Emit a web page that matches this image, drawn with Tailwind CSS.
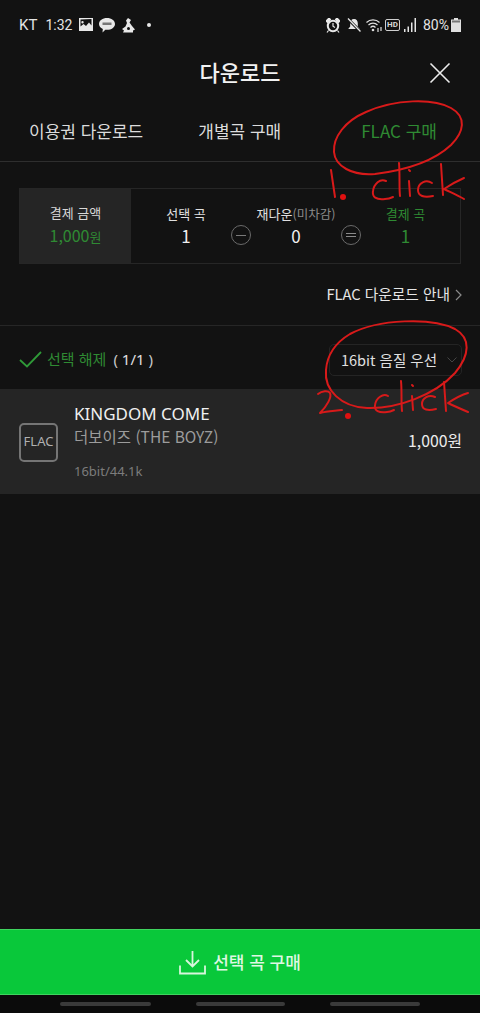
<!DOCTYPE html>
<html lang="ko">
<head>
  <meta charset="UTF-8" />
  <meta name="viewport" content="width=device-width, initial-scale=1" />
  <title>다운로드</title>
  <script src="https://cdn.jsdelivr.net/npm/@tailwindcss/browser@4"></script>
</head>
<body class="bg-[#121212] font-['Noto_Sans_CJK_KR','Noto_Sans',sans-serif]">
  <div class="relative w-[480px] h-[1013px] overflow-hidden flex flex-col bg-[#121212] text-white">

    <!-- status bar -->
    <div class="h-[50px] shrink-0 flex items-center justify-between pl-[19px] pr-[19px] text-[#e4e4e4]">
      <div class="flex items-center">
        <span class="text-[15px] leading-none font-['Roboto']">KT</span>
        <span class="ml-[8px] text-[14px] leading-none font-['Roboto']">1:32</span>
        <svg class="ml-[7px]" width="14" height="14" viewBox="0 0 14 14"><path fill="#e8e8e8" fill-rule="evenodd" d="M0 0h14v13H0zM1.500 1.500v7l3-2.500 2.500 2 3-3.500 2.500 3v-6.500zM3.500 3a1.200 1.200 0 1 1 0 2.400 1.200 1.200 0 0 1 0-2.400z"/></svg>
        <svg class="ml-[6px]" width="16" height="15" viewBox="0 0 16 15"><path fill="#e8e8e8" d="M8 0c4.400 0 8 2.600 8 5.900s-3.600 5.900-8 5.900c-.6 0-1.200 0-1.700-.1L3.500 14.500l.3-3.600C1.500 9.800 0 8 0 5.900 0 2.600 3.600 0 8 0z"/><rect x="3.500" y="4.500" width="9" height="2.500" fill="#777"/></svg>
        <svg class="ml-[7px]" width="13" height="15" viewBox="0 0 13 15"><path fill="#e8e8e8" d="M6 0l3 2-1.500 2.500L10 8l3 3.500-2 1v2H1l1-2-2-1.500L3.500 8.500 5 5 4 2.500z"/><circle cx="6.500" cy="10.500" r="1.500" fill="#121212"/></svg>
        <span class="ml-[12px] w-[4px] h-[4px] rounded-full bg-[#e8e8e8]"></span>
      </div>
      <div class="flex items-center">
        <svg width="14" height="15" viewBox="0 0 14 15"><circle cx="7" cy="8" r="5.200" fill="none" stroke="#e8e8e8" stroke-width="2"/><path d="M7 5v3.200l2 1.300" fill="none" stroke="#e8e8e8" stroke-width="1.200"/><path d="M0 3l3-3 1.500 1.500-3 3zM14 3l-3-3-1.500 1.500 3 3zM2.500 12.500L1 14.500M11.500 12.500l1.500 2" stroke="#e8e8e8" stroke-width="1.200" fill="#e8e8e8"/></svg>
        <svg class="ml-[7px]" width="14" height="14" viewBox="0 0 14 14"><path fill="#e8e8e8" d="M7 1c2.500 0 3.800 2 3.800 4.500v3l2 2.500H1.200l2-2.500v-3C3.200 3 4.500 1 7 1z"/><path d="M1 1l12 12" stroke="#121212" stroke-width="3"/><path d="M1 0.500l12.500 13" stroke="#e8e8e8" stroke-width="1.300"/></svg>
        <svg class="ml-[5px]" width="18" height="15" viewBox="0 0 18 15"><path d="M0.500 4.500C4 1 10 1 13.500 4.500M2.500 7C5 4.500 9 4.500 11.500 7M4.500 9.500C6 8 8 8 9.500 9.500" fill="none" stroke="#e0e0e0" stroke-width="1.200"/><circle cx="7" cy="12" r="1.300" fill="#e0e0e0"/><path d="M12 10v4M15 9v4" stroke="#e0e0e0" stroke-width="1.200"/></svg>
        <span class="ml-[1px] relative w-[15px] h-[12px] border border-[#cfcfcf] rounded-[2px] text-[8px] leading-[10px] font-bold text-center text-[#d8d8d8] font-['Roboto']">HD</span>
        <svg class="ml-[4px]" width="13" height="14" viewBox="0 0 13 14"><path fill="#e4e4e4" d="M0 11h1.500v3H0zM3.500 8.500H5V14H3.500zM7 4.500h1.500V14H7zM10.500 0H12v14h-1.500z"/></svg>
        <span class="ml-[6px] text-[14px] leading-none font-['Roboto']">80%</span>
        <svg class="ml-[2px]" width="10" height="14" viewBox="0 0 10 14"><path fill="#e0e0e0" d="M3 0h4v1.500h3V14H0V1.500h3z"/><rect x="1" y="2.500" width="8" height="2" fill="#777"/></svg>
      </div>
    </div>

    <!-- header -->
    <div class="relative h-[44px] shrink-0 flex items-center justify-center">
      <h1 class="mb-[2px] text-[22px] font-medium text-[#f2f2f2]">다운로드</h1>
      <svg class="absolute right-[29px] top-[12px]" width="22" height="22" viewBox="0 0 22 22"><path d="M1.500 1.500l19 19M20.500 1.500l-19 19" stroke="#ececec" stroke-width="1.600"/></svg>
    </div>

    <!-- tabs -->
    <div class="h-[68px] shrink-0 pt-[7px] flex items-center border-b border-[#2e2e2e] text-[17px] text-[#dcdcdc]">
      <span class="ml-[29px]">이용권 다운로드</span>
      <span class="ml-[55px]">개별곡 구매</span>
      <span class="ml-[80px] text-[#2f8a33]">FLAC 구매</span>
    </div>

    <!-- summary -->
    <div class="mx-[19px] mt-[26px] h-[76px] shrink-0 flex border border-[#262626] text-center">
      <div class="w-[111px] bg-[#252525] flex flex-col items-center justify-center">
        <span class="text-[13px] leading-[20px] text-[#d8d8d8]">결제 금액</span>
        <span class="text-[16px] leading-[24px] text-[#2f8a33]">1,000<span class="text-[13px]">원</span></span>
      </div>
      <div class="flex-1 flex items-center">
        <div class="w-[100px] pl-[10px] flex flex-col items-center">
          <span class="text-[13px] leading-[20px] text-[#e0e0e0]">선택 곡</span>
          <span class="text-[17px] leading-[24px] text-[#f0f0f0]">1</span>
        </div>
        <span class="w-[20px] h-[20px] mt-[18px] rounded-full border-[1.500px] border-[#6a6a6a] flex items-center justify-center"><span class="w-[10px] h-[1px] bg-[#7a7a7a]"></span></span>
        <div class="w-[90px] flex flex-col items-center">
          <span class="text-[13px] leading-[20px] text-[#e0e0e0] whitespace-nowrap">재다운<span class="text-[12.500px] text-[#8a8a8a]">(미차감)</span></span>
          <span class="text-[17px] leading-[24px] text-[#f0f0f0]">0</span>
        </div>
        <span class="w-[20px] h-[20px] mt-[18px] rounded-full border-[1.500px] border-[#6a6a6a] flex flex-col gap-[2px] items-center justify-center"><span class="w-[10px] h-[1px] bg-[#8a8a8a]"></span><span class="w-[10px] h-[1px] bg-[#8a8a8a]"></span></span>
        <div class="flex-1 pr-[10px] flex flex-col items-center">
          <span class="text-[13px] leading-[20px] text-[#2f8a33]">결제 곡</span>
          <span class="text-[17px] leading-[24px] text-[#2f8a33]">1</span>
        </div>
      </div>
    </div>

    <!-- guide link -->
    <div class="h-[62px] shrink-0 flex items-center justify-end pr-[18px] border-b border-[#262626] text-[14.700px] text-[#e6e6e6]">
      <span>FLAC 다운로드 안내</span>
      <svg class="ml-[5px]" width="7" height="12" viewBox="0 0 7 12"><path d="M1 1l5 5-5 5" fill="none" stroke="#8a8a8a" stroke-width="1.200"/></svg>
    </div>

    <!-- select row -->
    <div class="h-[63px] shrink-0 pt-[4px] flex items-center pl-[19px] pr-[18px]">
      <svg width="23" height="17" viewBox="0 0 23 17"><path d="M1 9l7 6.500L22 1" fill="none" stroke="#2f9a38" stroke-width="1.800"/></svg>
      <span class="ml-[5px] text-[15px] text-[#2f8a33]">선택 해제</span>
      <span class="ml-[7px] text-[15px] text-[#c8c8c8] font-['Noto_Sans'] whitespace-pre">( <span class="text-[#e0e0e0]">1/1</span> )</span>
      <div class="ml-auto w-[133px] h-[32px] rounded-[5px] border border-[#242424] flex items-center pl-[11px] text-[14.500px] text-[#e0e0e0]">
        <span>16bit 음질 우선</span>
        <svg class="ml-[10px]" width="10" height="6" viewBox="0 0 10 6"><path d="M0.500 0.500L5 5l4.500-4.500" fill="none" stroke="#444" stroke-width="1"/></svg>
      </div>
    </div>

    <!-- track -->
    <div class="h-[105px] shrink-0 bg-[#252525] flex items-center pl-[19px] pr-[18px]">
      <span class="w-[39px] h-[39px] mt-[1px] rounded-[5px] border-2 border-[#757575] flex items-center justify-center text-[13px] text-[#b0b0b0] font-['Noto_Sans']">FLAC</span>
      <div class="ml-[16px] mb-[2px] flex flex-col">
        <span class="text-[17px] leading-[24px] text-[#f0f0f0] font-['Noto_Sans']">KINGDOM COME</span>
        <span class="text-[15.500px] leading-[21px] text-[#9c9c9c]">더보이즈 (THE BOYZ)</span>
        <span class="mt-[15px] text-[13px] leading-[18px] text-[#7c7c7c] font-['Noto_Sans']">16bit/44.1k</span>
      </div>
      <span class="ml-auto mb-[2px] text-[15.800px] text-[#ececec]">1,000원</span>
    </div>

    <div class="flex-1"></div>

    <!-- buy button -->
    <div class="h-[66px] shrink-0 bg-[#09c83a] border-y border-[#3fd45f] flex items-center justify-center">
      <svg width="27" height="25" viewBox="0 0 27 25"><path d="M13.500 1v15M7 10l6.500 6.500L20 10M1 15.500V23.500H26V15.500" fill="none" stroke="#d8f5dc" stroke-width="1.800"/></svg>
      <span class="ml-[7px] text-[17px] font-medium text-[#dff7e3]">선택 곡 구매</span>
    </div>

    <!-- nav bar -->
    <div class="h-[18px] shrink-0 bg-[#0b0b0b] relative flex items-center justify-between pl-[60px] pr-[60px]">
      <span class="w-[91px] h-[4px] rounded-full bg-[#3a3a3a]"></span>
      <span class="w-[89px] h-[4px] rounded-full bg-[#3a3a3a]"></span>
      <span class="w-[90px] h-[4px] rounded-full bg-[#3a3a3a]"></span>
    </div>

    <!-- red pen annotations drawn over the screenshot -->
    <svg class="absolute inset-0 pointer-events-none" width="480" height="1013" viewBox="0 0 480 1013" fill="none" stroke="#d81a1a" stroke-width="2" stroke-linecap="round" stroke-linejoin="round">
      <path d="M334 152c-1-15 11-31 32-40 29-13 67-14 85-4 16 9 13 24 0 37-16 15-44 25-76 29-23 2-40-8-41-22z"/>
      <path d="M331 170l4 27"/>
      <circle cx="343" cy="197" r="3" fill="#e01010" stroke="none"/>
      <path d="M386 181c-6-3-12 3-13 10-1 6 3 9 12 8 3 0 6-1 8-2M399 163c1 12 0 24 1 33M409 181l1 15M409 170l1 1M432 183c-6-4-14 0-14 7 0 6 6 8 15 6M441 164l2 31M464 178c-7 3-14 7-20 11 6 3 13 6 20 10"/>
      <path d="M350 334c28-15 82-17 105-5 16 9 15 26 0 44-20 22-58 36-88 35-26-1-43-18-41-38 1-14 9-27 24-36z"/>
      <path d="M318 394c4-3 10-4 12-1 2 4-3 13-10 20 7-2 14-2 22-3"/>
      <circle cx="348" cy="416" r="3" fill="#e01010" stroke="none"/>
      <path d="M388 396c-5-3-12 2-13 9-1 6 4 8 12 7 3 0 5-1 7-2M401 381c1 10 0 21 1 30M412 396l1 14M412 385l1 1M435 397c-6-3-13 1-13 7 0 6 6 7 14 5M444 382l2 29M468 393c-7 2-14 6-20 10 6 3 13 6 20 9"/>
    </svg>
  </div>
</body>
</html>
